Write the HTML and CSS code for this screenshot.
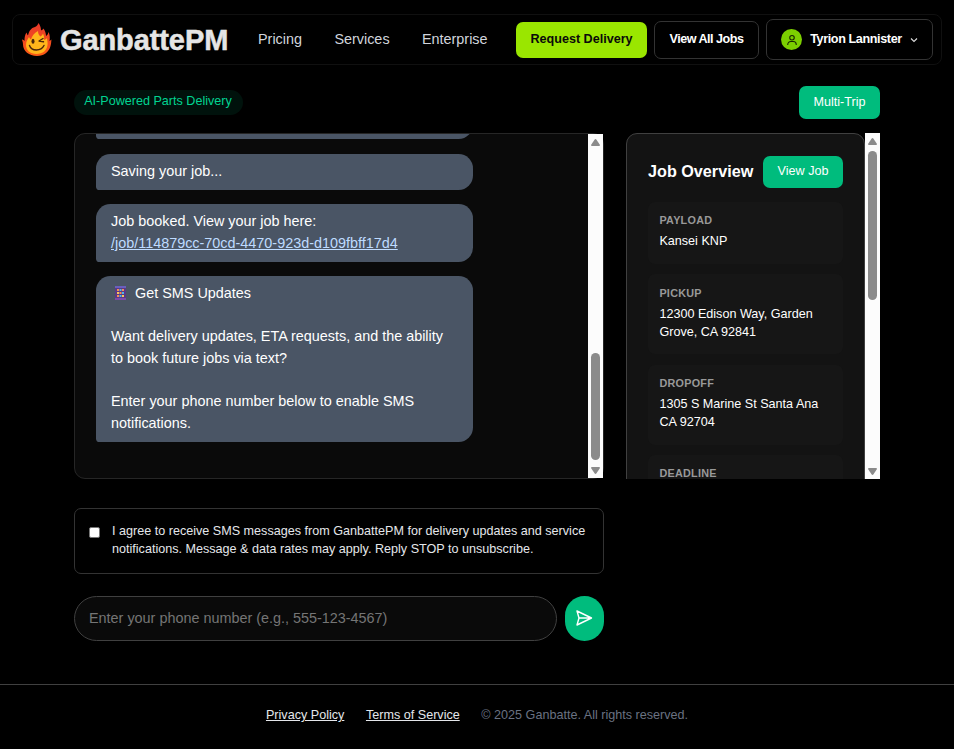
FILE: index.html
```
<!DOCTYPE html>
<html lang="en">
<head>
<meta charset="utf-8">
<title>GanbattePM</title>
<link rel="stylesheet" href="styles.css">
</head>
<body>
<header class="topbar">
  <a class="brand">
    <svg class="flame" viewBox="0 0 30 34" aria-hidden="true">
      <defs><linearGradient id="fire" x1="0" y1="0" x2="0" y2="1"><stop offset="0" stop-color="#e8392b"/><stop offset="1" stop-color="#fb5a14"/></linearGradient></defs>
      <path fill="url(#fire)" d="M15 33C7 33 1 28 1 21.500C1 19 0 17 0 16.500C1.500 16.500 2.500 18 2.500 18C2.500 14 3 12 4.500 9.500C5 11 5.500 12 6 12.500C7 8 9 5 13 4C15 3 16 1.500 16.500 0C18.500 3 19 5 19 7.500C20 7 21 6.500 21.500 5.500C23 8 24 10 24 13C25.500 12 26 11 26.500 9C28 12 28 15 27.500 18L29.500 16.500C29 19 29.500 20 28.500 23C27 29 22 33 15 33Z"/>
      <path fill="#ffb51b" d="M14.500 31C8 31 4 27 4 22C4 18 6 16 7 14C7.500 15 8 16 9 16.500C10 13 12 10 16 8C16 11 17 12 18.500 13.500C20 12.500 20.500 11.500 21 10.500C22 13 22.500 15 22 17C24 16.500 24.500 15.500 25 15C25 17 26 19 25.500 22C25 27 21 31 14.500 31Z"/>
      <ellipse cx="11" cy="18.200" rx="1.500" ry="2.500" fill="#49240a"/>
      <path d="M21 15.500L17 18L21.500 18.800M7.500 22.500C9.500 28.500 19 28.500 22 22.500" fill="none" stroke="#49240a" stroke-width="1.400" stroke-linecap="round" stroke-linejoin="round"/>
    </svg>
    <span class="wordmark">GanbattePM</span>
  </a>
  <nav class="nav"><a>Pricing</a><a>Services</a><a>Enterprise</a></nav>
  <div class="actions">
    <a class="btn lime">Request Delivery</a>
    <a class="btn outline">View All Jobs</a>
    <a class="btn account">
      <span class="avatar"><svg viewBox="0 0 24 24"><circle cx="12" cy="7.500" r="4.500"/><path d="M3.500 22v-1a6 6 0 0 1 6-6h5a6 6 0 0 1 6 6v1"/></svg></span>
      <span class="name">Tyrion Lannister</span>
      <svg class="caret" viewBox="0 0 8 6"><path d="M1 1.500l3 3 3-3"/></svg>
    </a>
  </div>
</header>

<main class="page">
  <div class="heading"><span class="tag">AI-Powered Parts Delivery</span><a class="green trip">Multi-Trip</a></div>
  <div class="columns">
    <section class="chat">
      <div class="messages">
        <div class="bubble earlier"></div>
        <div class="bubble">Saving your job...</div>
        <div class="bubble">Job booked. View your job here:<br><a>/job/114879cc-70cd-4470-923d-d109fbff17d4</a></div>
        <div class="bubble"><svg class="phone" viewBox="0 0 11 14"><rect width="11" height="14" fill="#5a3a86"/><rect width="11" height="2" fill="#6a5fbd"/><rect y="12" width="11" height="2" fill="#7b4ba8"/><g fill="#f58b57"><rect x="2" y="3" width="2" height="2"/><rect x="7" y="3" width="2" height="2"/><rect x="4.500" y="6" width="2" height="2"/><rect x="2" y="9" width="2" height="2"/></g><g fill="#4bb8e8"><rect x="4.500" y="3" width="2" height="2"/><rect x="7" y="6" width="2" height="2"/><rect x="4.500" y="9" width="2" height="2"/></g><g fill="#f7c65b"><rect x="2" y="6" width="2" height="2"/><rect x="7" y="9" width="2" height="2"/></g></svg>Get SMS Updates<br><br>Want delivery updates, ETA requests, and the ability<br>to book future jobs via text?<br><br>Enter your phone number below to enable SMS notifications.</div>
      </div>
      <div class="scrollbar">
        <svg viewBox="0 0 9 7"><path d="M4.500 0Q5 0 5.500 .7L9 6Q9 7 8 7H1Q0 7 0 6L3.500 .7Q4 0 4.500 0Z"/></svg>
        <i class="thumb low"></i>
        <svg viewBox="0 0 9 7"><path d="M4.500 7Q5 7 5.500 6.300L9 1Q9 0 8 0H1Q0 0 0 1L3.500 6.300Q4 7 4.500 7Z"/></svg>
      </div>
    </section>
    <aside class="side">
      <div class="overview">
        <div class="overview-head"><h2>Job Overview</h2><a class="green">View Job</a></div>
        <div class="fact"><h3>PAYLOAD</h3><p>Kansei KNP</p></div>
        <div class="fact"><h3>PICKUP</h3><p>12300 Edison Way, Garden Grove, CA 92841</p></div>
        <div class="fact"><h3>DROPOFF</h3><p>1305 S Marine St Santa Ana CA 92704</p></div>
        <div class="fact"><h3>DEADLINE</h3></div>
      </div>
      <div class="scrollbar">
        <svg viewBox="0 0 9 7"><path d="M4.500 0Q5 0 5.500 .7L9 6Q9 7 8 7H1Q0 7 0 6L3.500 .7Q4 0 4.500 0Z"/></svg>
        <i class="thumb high"></i>
        <svg viewBox="0 0 9 7"><path d="M4.500 7Q5 7 5.500 6.300L9 1Q9 0 8 0H1Q0 0 0 1L3.500 6.300Q4 7 4.500 7Z"/></svg>
      </div>
    </aside>
  </div>
  <form class="signup">
    <label class="consent"><input type="checkbox"><span>I agree to receive SMS messages from GanbattePM for delivery updates and service notifications. Message &amp; data rates may apply. Reply STOP to unsubscribe.</span></label>
    <div class="entry">
      <input class="tel" type="tel" placeholder="Enter your phone number (e.g., 555-123-4567)">
      <button class="send" type="button" aria-label="Send"><svg viewBox="0 0 18 18"><path d="M2 2L16.500 9L2 16L4 9ZM4 9H16"/></svg></button>
    </div>
  </form>
</main>
<footer class="footer"><a>Privacy Policy</a><a>Terms of Service</a><span>© 2025 Ganbatte. All rights reserved.</span></footer>
</body>
</html>
```
FILE: styles.css
```
* { box-sizing: border-box; }
body { margin: 0; background: #000; color: #fff; font: 14.4px/21.6px "Liberation Sans", Arial, sans-serif; height: 749px; overflow: hidden; display: flex; flex-direction: column; }
h2, h3, p { margin: 0; }
svg { display: block; flex: none; }

.topbar { margin: 14px 12px 0; height: 51px; border: 1px solid #101010; border-radius: 8px; display: flex; align-items: center; padding: 0 8px 0 9px; flex: none; }
.brand { display: flex; align-items: center; width: 236px; }
.flame { width: 30px; height: 34px; }
.wordmark { margin-left: 8px; font: 700 29px/34px "Liberation Sans", Arial, sans-serif; letter-spacing: -.1px; -webkit-text-stroke: .5px #e5e5e5; color: #e5e5e5; white-space: nowrap; }
.nav { display: flex; gap: 32.400px; color: #d1d5dc; }
.actions { margin-left: auto; display: flex; align-items: center; gap: 7px; font-size: 12.600px; line-height: 18px; font-weight: 700; white-space: nowrap; }
.btn { display: flex; align-items: center; justify-content: center; border-radius: 7px; padding-bottom: 2px; }
.lime { width: 131px; height: 36px; background: #9ae600; color: #0a0a0a; letter-spacing: 0; }
.outline { width: 105px; height: 38px; border: 1px solid #333; letter-spacing: -.5px; }
.account { width: 167px; height: 41px; border: 1px solid #333; gap: 8px; padding-bottom: 0; letter-spacing: -.38px; }
.name { padding-bottom: 2px; }
.avatar { width: 21px; height: 21px; border-radius: 50%; background: #7ccf00; display: grid; place-items: center; }
.avatar svg { width: 12px; height: 12px; fill: none; stroke: #182600; stroke-width: 2.200; }
.caret { width: 8px; height: 6px; fill: none; stroke: #ddd; stroke-width: 1.100; }

.page { width: 806px; margin: 21px 0 0 74px; flex: none; }
.heading { display: flex; justify-content: space-between; height: 47px; font-size: 12.600px; line-height: 18px; }
.tag { margin-top: 4px; width: 169px; height: 25px; padding: 2px 1px 0 0; border-radius: 13px; background: #00120c; color: #00d492; text-align: center; }
.green { display: flex; justify-content: center; width: 80px; height: 32px; padding-top: 6px; border-radius: 7px; background: #00bc7d; font-size: 12.600px; line-height: 18px; }
.trip { width: 81px; height: 33px; padding-top: 7px; }
.columns { display: flex; gap: 22px; height: 346px; }
.chat { width: 530px; border: 1px solid #262626; border-radius: 11px; background: #0a0a0a; display: flex; }
.messages { flex: 1; overflow: hidden; padding: 0 0 36px 21px; display: flex; flex-direction: column; justify-content: flex-end; gap: 14.400px; }
.bubble { flex: none; width: 377px; padding: 6.800px 14.400px 7.600px 15px; border-radius: 14.400px 14.400px 14.400px 3.600px; background: #4a5565; }
.earlier { height: 36px; margin-bottom: .4px; }
.bubble a { color: #bedbff; text-decoration: underline; }
.phone { display: inline-block; width: 11px; height: 14px; margin: 0 9px 0 4px; vertical-align: -2px; }
.scrollbar { width: 15px; flex: none; background: #fcfcfc; display: flex; flex-direction: column; align-items: center; padding: 5px 0 4px; }
.scrollbar svg { width: 9px; height: 7px; fill: #8b8b8b; }
.thumb { width: 9px; border-radius: 5px; background: #8b8b8b; }
.low { height: 107px; margin: auto 0 7px; }
.high { height: 149px; margin: 6px 0 auto; }
.side { width: 254px; display: flex; overflow: hidden; }
.overview { width: 239px; height: 600px; border: 1px solid #404040; border-radius: 11px; padding: 22px 21px; background: #131313; }
.side .scrollbar { height: 346px; }
.overview-head { display: flex; justify-content: space-between; align-items: center; height: 32px; margin-bottom: 14px; }
h2 { font-size: 16.200px; line-height: 24px; padding-bottom: 2px; white-space: nowrap; }
.fact { padding: 11.400px 10.400px 10.200px 11.400px; margin-bottom: 10.400px; border-radius: 7px; background: #161616; font-size: 12.600px; line-height: 18px; }
.fact h3 { font-size: 10.800px; line-height: 14.400px; letter-spacing: .27px; color: #999; margin: 0 0 4.400px; }
.fact p { padding-bottom: 3.600px; }

.consent { display: flex; margin-top: 29px; width: 530px; height: 66px; border: 1px solid #333; border-radius: 7px; padding: 13px 14px; font-size: 12.600px; line-height: 18px; color: #e5e7eb; }
.consent input { appearance: none; width: 11px; height: 11px; margin: 5px 12px 0 0; flex: none; background: #fff; border: 1px solid #767676; border-radius: 2px; }
.entry { display: flex; gap: 8px; margin-top: 22px; }
.tel { width: 483px; height: 45px; border: 1px solid #404040; border-radius: 23px; background: #0a0a0a; padding: 0 14px 2px; font: inherit; color: #fff; }
.tel::placeholder { color: #757575; opacity: 1; }
.send { width: 39px; height: 45px; border: 0; border-radius: 20px; padding: 0 2px 1px 0; background: #00bc7d; display: grid; place-items: center; }
.send svg { width: 18px; height: 18px; fill: none; stroke: #fff; stroke-width: 1.400; stroke-linejoin: round; }
.footer { margin-top: 43px; border-top: 1px solid #404040; padding-top: 21px; display: flex; justify-content: center; gap: 21.600px; font-size: 12.600px; line-height: 18px; color: #e5e7eb; }
.footer a { text-decoration: underline; }
.footer span { color: #6a7282; }
```
